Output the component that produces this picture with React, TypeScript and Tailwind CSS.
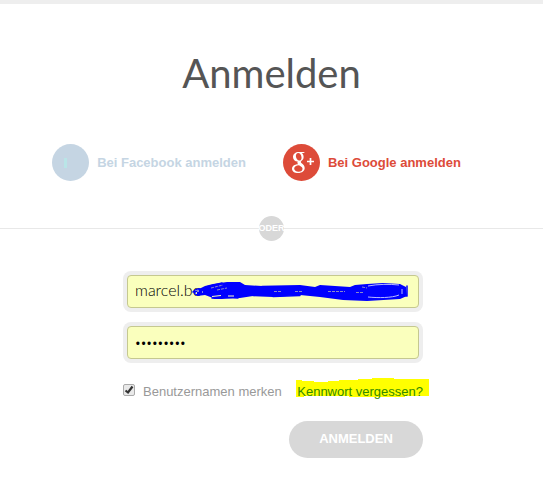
import React, { useState } from 'react';

const GooglePlusIcon: React.FC = () => (
  <svg viewBox="0 0 37 37" className="size-[37px] shrink-0" aria-hidden="true">
    <circle cx="18.5" cy="18.5" r="18.5" fill="#dd4b39" />
    <path
      fill="#fff"
      fillRule="evenodd"
      d="M22 8h-6.2c-3.3 0-5.8 2-5.8 5 0 2.600 1.900 4.600 4.700 4.600-.5.900-.4 1.800.4 2.600-3.800.1-6.100 1.900-6.100 4.500 0 2.700 2.500 4.300 6 4.300 4.300 0 6.700-2.300 6.700-5 0-2-1-3.200-2.700-4.500-1.500-1.100-1.500-1.700-.4-2.700 1.300-1.100 2-2.200 2-3.900 0-1.600-.6-2.900-1.800-3.800h1.700zM15.200 9c1.700 0 3.100 1.700 3.300 4.200.2 2.100-.7 3.400-2.300 3.400s-3-1.700-3.300-4c-.2-2.100.8-3.600 2.300-3.600zM16 21.200c2.300 1.400 3.500 2.100 3.500 3.600 0 1.800-1.300 3-3.900 3-2.600 0-4.400-1.300-4.400-3.200 0-2 2-3.300 4.800-3.400z"
    />
    <path d="M24 17.500h7M27.500 14v7" stroke="#fff" strokeWidth="1.700" />
  </svg>
);

const FacebookIcon: React.FC = () => (
  <svg viewBox="0 0 37 37" className="size-[37px] shrink-0" aria-hidden="true">
    <circle cx="18.5" cy="18.5" r="18.5" fill="#c5d5e3" />
    <path d="M12 14h3v10h-3z" fill="#b9e5e7" />
  </svg>
);

// Blue marker drawn over the rest of the user name
const Scribble: React.FC = () => (
  <svg viewBox="0 0 217 22" className="absolute left-[69px] top-2.5 h-[22px] w-[217px] pointer-events-none" fill="none" aria-hidden="true">
    <path
      fill="#00f"
      d="M5 9 13 5 21 3 35 1H48L53 4 70 5 108 4 123 6 128 4 158 6 163 4 175 3 191 2 208 3 214 6 215 15 208 18 175 20 151 19 128 16 108 14 81 16 61 15 48 17H21L13 14 5 15z"
    />
    <g stroke="#00f" strokeWidth="1.500" strokeLinecap="round">
      <path d="M1 11c3-4 8-4 9-1s-4 5-7 3 6-5 10-3M20 17c10 1 18-1 26 0M14 6 30 2M215 5v10M211 14l4 1M70 5.500h38M61 14.500h20M81 15.500l27-1" />
    </g>
    <g stroke="#faffbd" strokeWidth="1">
      <path d="M5 10h2M10 11h1M20 15.500l9-1M36 15h6" />
      <path d="M176 5c10-2 22-2 31-1M176 16c10 1 24 1 31-2M210 8v5" stroke="#b9b9ff" />
      <path d="M19 7l12-3M25 9l10-2M82 10.500h7M103 10.500h7M136 10.500h17M164 11.500h8M170 6l5 1" stroke="#8a8ac8" strokeDasharray="3 1" />
    </g>
  </svg>
);

const inputClasses =
  'block w-full h-[33px] rounded-[4px] border border-[#c5c890] bg-[#faffbd] px-[7px] text-black outline-none';

const App: React.FC = () => {
  const [username, setUsername] = useState('marcel.be');
  const [password, setPassword] = useState('kennwort1');
  const [remember, setRemember] = useState(true);

  return (
    <main className="border-t-4 border-[#eee] bg-white pb-10 font-['Liberation_Sans',sans-serif] text-[13px]">
      <h1 className="pt-[45px] text-center font-['Lato',sans-serif] text-[40px] leading-12 text-[#555]">Anmelden</h1>

      <div className="mt-[47px] flex justify-center gap-[37px] pr-[30px] font-bold">
        <a href="#facebook" className="flex items-center gap-2 whitespace-nowrap text-[#c5d5e3]">
          <FacebookIcon />
          Bei Facebook anmelden
        </a>
        <a href="#google" className="flex items-center gap-2 whitespace-nowrap text-[#dd4b39]">
          <GooglePlusIcon />
          Bei Google anmelden
        </a>
      </div>

      <div className="mt-[35px] flex items-center">
        <span className="h-px flex-1 bg-[#e8e8e8]" />
        <span className="flex size-[25px] items-center justify-center rounded-full bg-[#d8d8d8] text-[9px] font-bold text-white">ODER</span>
        <span className="h-px flex-1 bg-[#e8e8e8]" />
      </div>

      <form className="ml-[3px] mt-[30px] flex flex-col items-center" onSubmit={(e) => e.preventDefault()}>
        <div className="w-[300px]">
          <div className="relative rounded-lg bg-[#eee] p-1">
            <input
              type="text"
              aria-label="Benutzername"
              value={username}
              onChange={(e) => setUsername(e.target.value)}
              className={`${inputClasses} pb-1 font-['Lato',sans-serif] text-base font-light`}
            />
            <Scribble />
          </div>
          <div className="mt-2.5 rounded-lg bg-[#eee] p-1">
            <input
              type="password"
              aria-label="Kennwort"
              value={password}
              onChange={(e) => setPassword(e.target.value)}
              className={`${inputClasses} font-['Open_Sans',sans-serif] text-[15px]`}
            />
          </div>

          <div className="mt-[19px] flex items-center justify-between">
            <label className="flex items-center gap-2 whitespace-nowrap text-[#999]">
              <span className="relative mb-1 block size-3">
                <input
                  type="checkbox"
                  checked={remember}
                  onChange={(e) => setRemember(e.target.checked)}
                  className="peer block size-3 appearance-none rounded-[2px] border border-[#aaa] bg-[#e9e9e9]"
                />
                <svg viewBox="0 0 12 12" className="pointer-events-none absolute inset-0 hidden size-3 peer-checked:block" fill="none" aria-hidden="true">
                  <path d="M2.500 6.500 5 8.500 9.500 2.500" stroke="#333" strokeWidth="2.200" />
                </svg>
              </span>
              Benutzernamen merken
            </label>
            <a href="#kennwort" className="relative whitespace-nowrap text-[#338a00]">
              <svg viewBox="0 0 133 20" className="absolute -left-px -top-1 h-5 w-[133px]" aria-hidden="true">
                <path d="M0 2h6v1h12v1h14V3h11V2h19V1h14V0h22v1h35v17h-24v1H53v-1H8v1H0z" fill="#ff0" />
              </svg>
              <span className="relative">Kennwort vergessen?</span>
            </a>
          </div>

          <button type="submit" className="ml-auto mt-[19px] block h-[37px] w-[134px] rounded-full bg-[#d8d8d8] font-bold text-white">
            ANMELDEN
          </button>
        </div>
      </form>
    </main>
  );
};

export default App;
